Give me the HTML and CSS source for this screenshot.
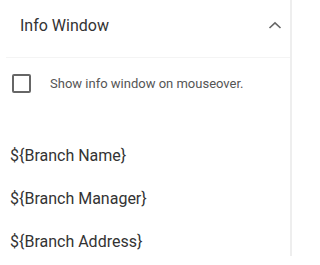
FILE: index.html
```html
<!DOCTYPE html>
<html lang="en">

<head>
  <meta charset="UTF-8" />
  <title>Info Window</title>
  <link rel="stylesheet" href="styles.css">
</head>

<body>
  <aside class="panel">
    <!-- Section header -->
    <header class="panel-header">
      <span class="panel-title">Info Window</span>
      <svg class="chevron" width="14" height="8" viewBox="0 0 14 8">
        <path d="M1.5 7 L7 1.8 L12.5 7" fill="none" stroke="#666" stroke-width="1.6" />
      </svg>
    </header>

    <label class="check-row">
      <span class="checkbox"></span>
      <span class="check-label">Show info window on mouseover.</span>
    </label>

    <!-- Template fields -->
    <ul class="field-list">
      <li>${Branch Name}</li>
      <li>${Branch Manager}</li>
      <li>${Branch Address}</li>
    </ul>
  </aside>
</body>

</html>
```

FILE: styles.css
```css
* {
  margin: 0;
  padding: 0;
  box-sizing: border-box;
}

body {
  background-color: #fff;
  font-family: Roboto, sans-serif;
  color: #333;
}

.panel {
  width: 292px;
  height: 256px;
  border-right: 2px solid #eee;
}

.panel-header {
  height: 58px;
  margin-left: 6px;
  padding: 16px 8px 0 14px;
  display: flex;
  align-items: flex-start;
  justify-content: space-between;
  border-bottom: 1px solid #f4f4f4;
}

.panel-title {
  font-size: 16px;
  line-height: 19px;
  color: #333;
}

.chevron {
  display: block;
  margin-top: 5px;
}

.check-row {
  display: flex;
  align-items: center;
  height: 36px;
  margin-top: 7px;
  padding-left: 12px;
}

.checkbox {
  width: 19px;
  height: 19px;
  border: 2px solid #666;
  border-radius: 2px;
}

.check-label {
  margin-left: 19px;
  font-size: 13px;
  color: #555;
}

.field-list {
  list-style: none;
  padding-left: 10px;
  margin-top: 33px;
}

.field-list li {
  height: 43px;
  line-height: 43px;
  font-size: 16px;
  color: #333;
}
```
